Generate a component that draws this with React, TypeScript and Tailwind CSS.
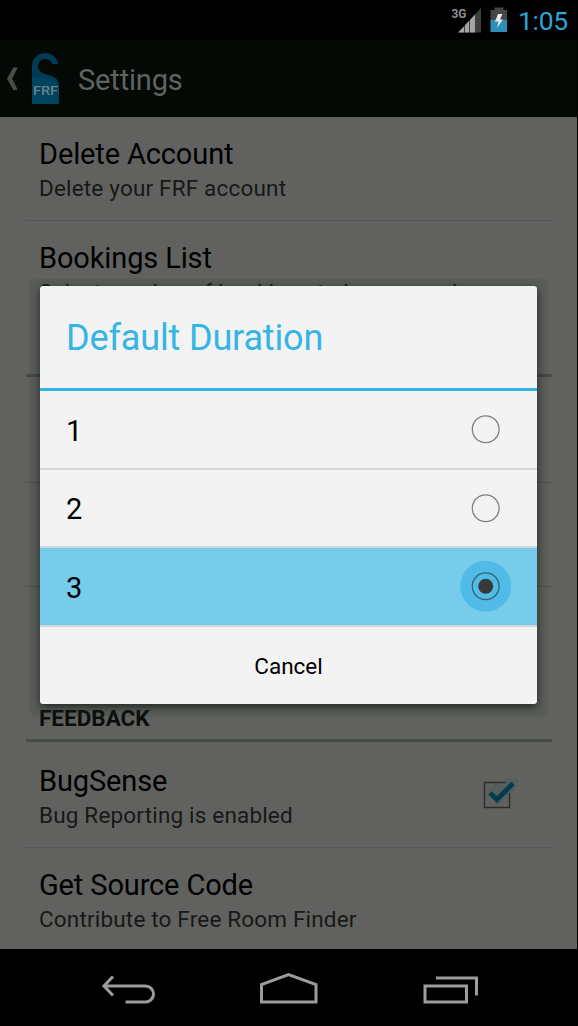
import React from "react";

const R = "font-['Roboto',sans-serif]";

function Label({ children, className }: { children: React.ReactNode; className: string }) {
  return <div className={`whitespace-nowrap ${className}`}>{children}</div>;
}

function Item({ title, summary, className, children }: {
  title: string; summary: string; className: string; children?: React.ReactNode;
}) {
  return (
    <div className={`ml-[26px] flex w-[526px] items-center justify-between border-[#565556] pl-[13px] ${className}`}>
      <div>
        <Label className="text-[29px] leading-[34px] tracking-[-0.13px] text-black">{title}</Label>
        <Label className="mt-[3px] text-[22.5px] leading-[28px] tracking-[0.18px] text-[#171817]">{summary}</Label>
      </div>
      {children}
    </div>
  );
}

function Radio({ checked }: { checked?: boolean }) {
  return (
    <svg width="52" height="52" viewBox="0 0 52 52" className="shrink-0">
      {checked && <circle cx="25.7" cy="26.3" r="25.5" fill="#50bbe6" />}
      <circle cx="25.7" cy="26.3" r="13.4" fill="none" stroke={checked ? "#37616f" : "#7f7f7f"} strokeWidth="1.3" />
      {checked && <circle cx="25.7" cy="26.3" r="7.5" fill="#363b38" />}
    </svg>
  );
}

function Choice({ value, checked, className }: { value: string; checked?: boolean; className: string }) {
  return (
    <div className={`flex h-[78.5px] shrink-0 items-center justify-between border-b-2 pl-[26px] pr-[25px] text-[29px] text-black ${className}`}>
      <span className="pt-[4px]">{value}</span>
      <Radio checked={checked} />
    </div>
  );
}

export default function App() {
  return (
    <div className={`relative flex h-[1026px] w-[578px] flex-col overflow-hidden bg-black ${R}`}>
      <div className="flex h-[40px] shrink-0 items-start">
        <svg width="70" height="40" viewBox="448 0 70 40" className="ml-[448px] shrink-0">
          <text x="451.5" y="18" fontSize="13" fontWeight="700" textLength="15" lengthAdjust="spacingAndGlyphs" fill="#8e8e8e" fontFamily="Roboto">3G</text>
          <path d="M466 24 L481 8 V32.5 H458Z" fill="#3e3e3e" />
          <path d="M458 32.5 L464 26.5 V32.5Z M465 25.3 L469 21 V32.5 H465Z M470 20 L475 14.5 V32.5 H470Z" fill="#a5a5a5" />
          <path d="M490.5 10 H494.5 V7.5 H503.5 V10 H507 V19.5 H490.5Z" fill="#454545" />
          <path d="M490.5 19.5 H507 V32 H490.5Z" fill="#2c8fb8" />
          <path d="M498 14 H502.5 L500 19.5 H503 L497 28 L498.5 21.5 H495Z" fill="#e8e8e8" />
        </svg>
        <Label className="mt-[5px] text-[26.5px] leading-[32px] tracking-[-0.3px] text-[#2ba6d8]">1:05</Label>
      </div>

      <div className="flex h-[77px] w-[577px] shrink-0 items-center bg-[#050905]">
        <svg width="64" height="77" viewBox="0 40 64 77" className="shrink-0">
          <path d="M13.3 67.5 H17.7 L12.2 78.5 L17.7 90 H13.3 L7 78.5Z" fill="#4b4d4b" />
          <path d="M32 104 V66.5 C32 58.500 38 53 45 53 C51.500 53 57 57.500 58.500 64 H52.300 C51.300 61 48.500 59 45 59 C41 59 38 62.500 38 66.500 C38 71 42 73.500 47 74.500 C54.500 76 59 79 59 86 V104Z" fill="#013a54" />
          <path d="M32 104 V77.5 C44 77.5 54 80 59 85 V104Z" fill="#00445f" />
          <text x="33" y="94.5" fontSize="12.5" fontWeight="500" textLength="25" lengthAdjust="spacingAndGlyphs" fill="#6b8088" fontFamily="Roboto">FRF</text>
        </svg>
        <Label className="ml-[14px] mt-[3px] text-[29px] leading-[34px] tracking-[-0.15px] text-[#616361]">Settings</Label>
      </div>

      <div className="h-[832px] w-[577px] shrink-0 overflow-hidden bg-[#61625f]">
        <Item className="h-[104px] border-b pt-[2px]" title="Delete Account" summary="Delete your FRF account" />
        <Item className="h-[104px]" title="Bookings List" summary="Select number of bookings to keep saved" />
        <div className="ml-[26px] mt-[49px] h-[3px] w-[526px] bg-[#454b45]" />
        <div className="ml-[26px] mt-[105px] h-px w-[526px] bg-[#51534f]" />
        <div className="ml-[26px] mt-[103px] h-px w-[526px] bg-[#51534f]" />
        <Label className="ml-[39px] mt-[117px] text-[22.5px] font-bold leading-[28px] text-[#0c0e0c]">FEEDBACK</Label>
        <div className="ml-[26px] mt-[7px] h-[3px] w-[526px] bg-[#454b45]" />
        <Item className="h-[106px] border-b pt-[3px]" title="BugSense" summary="Bug Reporting is enabled">
          <svg width="40" height="40" viewBox="480 776 40 40" className="mr-[32px] shrink-0">
            <path d="M486 790 L507 778 L518 780 L515 790 L497 806Z" fill="#4b595d" opacity=".5" />
            <path d="M505.5 782.5 H484.5 V807.5 H509.5 V793" fill="none" stroke="#2b2d2a" strokeWidth="1.4" />
            <path d="M490 793 L497 799.5 L513 783.5" fill="none" stroke="#013e4d" strokeWidth="5" />
          </svg>
        </Item>
        <Item className="h-[104px]" title="Get Source Code" summary="Contribute to Free Room Finder" />
      </div>

      <div className="flex h-[77px] shrink-0">
        <svg width="578" height="77" viewBox="0 949 578 77" fill="none" stroke="#9c9c9c" strokeWidth="3">
          <path d="M104 986 H145.500 A8 8 0 0 1 145.500 1002 H125.500 M113 976.500 L104 986 L113 995.500" />
          <path d="M261.500 1002 V984.500 L288.500 974.500 L316 984.500 V1002Z" />
          <path d="M425 986 H466.500 V1002 H425Z M436 978 H476.500 V995.500" />
        </svg>
      </div>

      <div className="absolute left-[29px] top-[278px] flex h-[439px] w-[519px] justify-center rounded-[8px] bg-[#203c28]/12 pt-[7.5px]">
        <div className="flex h-[418.5px] w-[497px] flex-col overflow-hidden rounded-[3px] bg-[#f3f3f3] shadow-[0_3px_8px_0px_rgba(0,0,0,0.6)]">
          <div className="flex h-[105.5px] shrink-0 items-center border-b-[3px] border-[#30b2e2] pl-[26px] pt-[3px]">
            <Label className="text-[36px] leading-[42px] tracking-[-0.15px] text-[#33b5e5]">Default Duration</Label>
          </div>
          <Choice value="1" className="border-[#d8d8d8]" />
          <Choice value="2" className="border-[#d3d8da]" />
          <Choice value="3" checked className="border-[#cfd5da] bg-[#78cceb]" />
          <div className="flex flex-1 items-center justify-center pt-[2px]">
            <Label className="text-[22.5px] leading-[28px] text-black">Cancel</Label>
          </div>
        </div>
      </div>
    </div>
  );
}
